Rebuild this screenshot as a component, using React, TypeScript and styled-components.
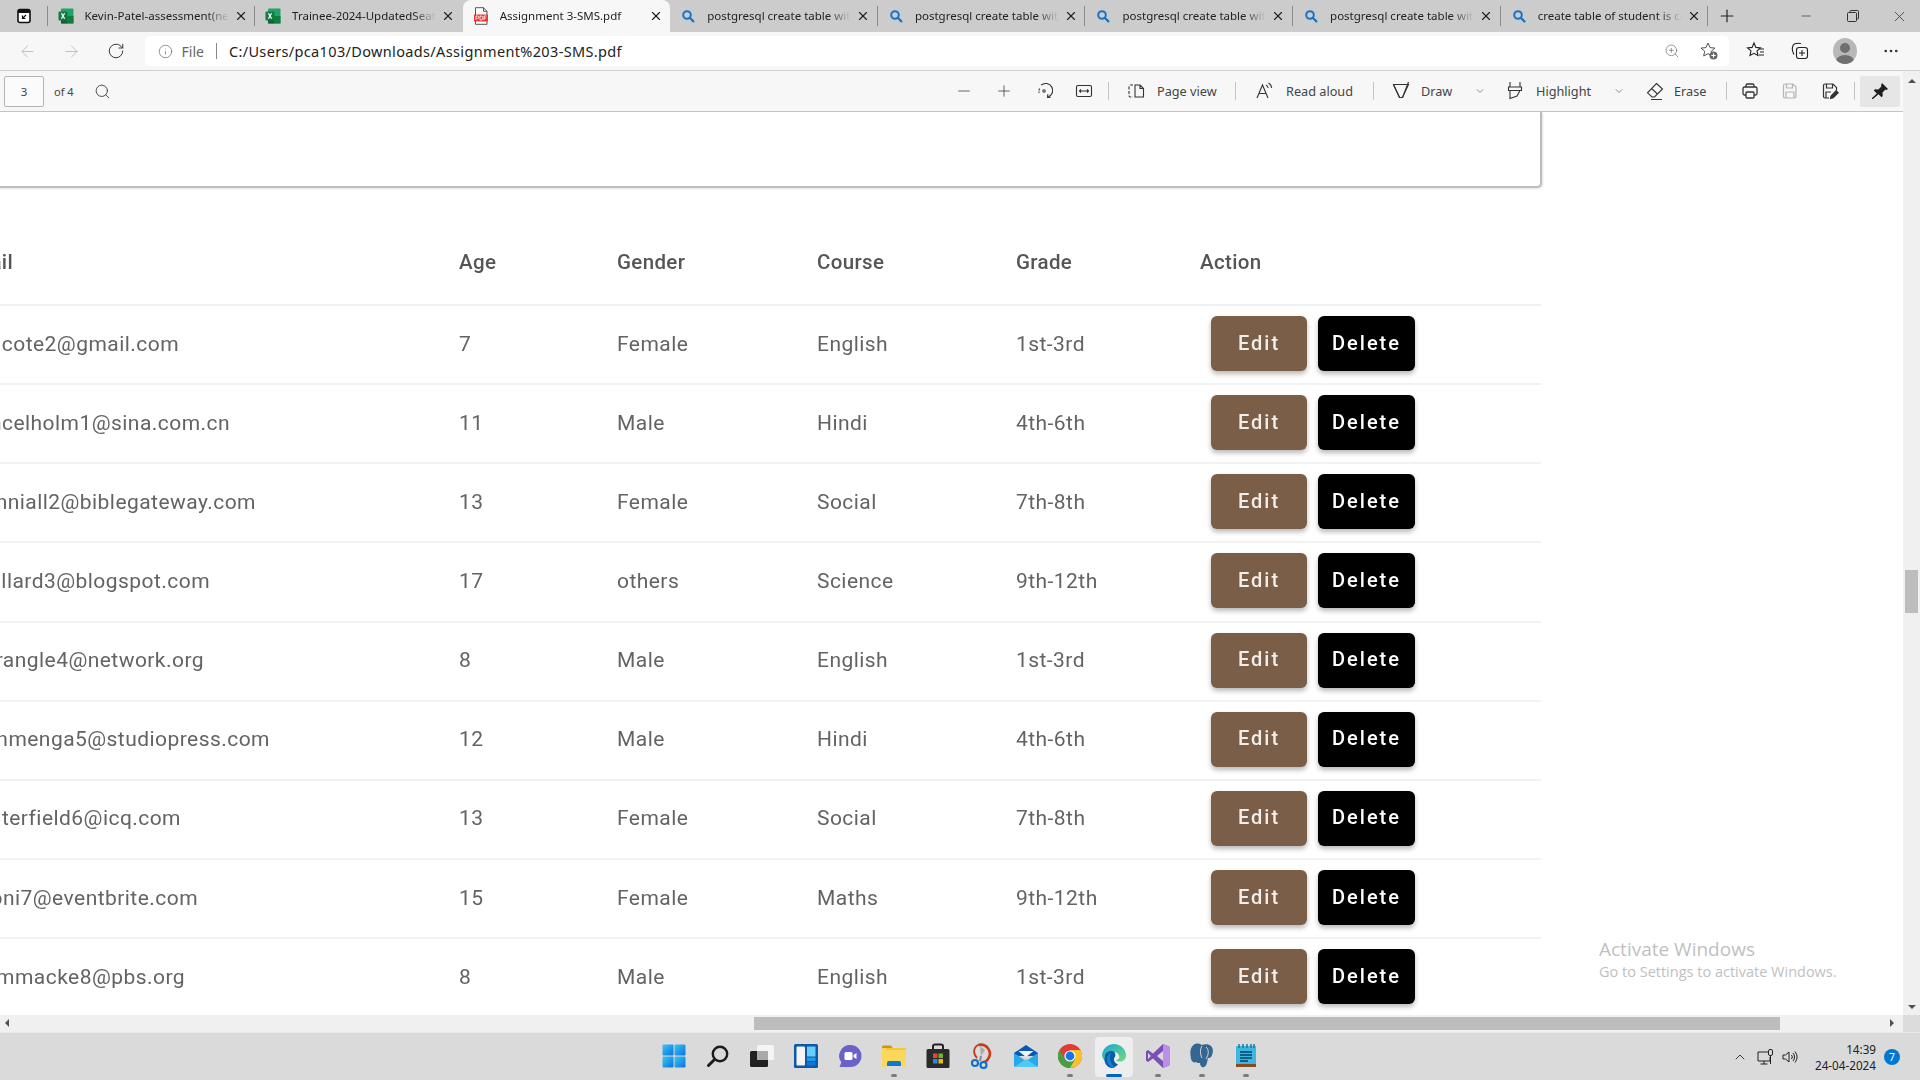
import React from "react";
import styled, { createGlobalStyle } from "styled-components";
import {
  ArrowLeft,
  ArrowRight,
  ChevronDown,
  ChevronUp,
  Info,
  Minus,
  MoreHorizontal,
  Plus,
  RotateCw,
  Search,
  X,
  ZoomIn,
} from "lucide-react";

const GlobalStyle = createGlobalStyle`
  html, body {
    margin: 0;
    padding: 0;
    width: 1920px;
    height: 1080px;
    overflow: hidden;
    background: #fff;
  }
  * { box-sizing: border-box; }
`;

const UI_FONT = `"Noto Sans", "Open Sans", sans-serif`;

const Screen = styled.div`
  width: 1920px;
  height: 1080px;
  display: flex;
  flex-direction: column;
  position: relative;
  font-family: ${UI_FONT};
  overflow: hidden;
`;

/* ---------- tab strip ---------- */
const TabStrip = styled.div`
  height: 32px;
  flex: none;
  background: #cccccc;
  display: flex;
  align-items: stretch;
`;

const StripButton = styled.div`
  width: 47.5px;
  flex: none;
  display: flex;
  align-items: center;
  justify-content: center;
  position: relative;
  &::after {
    content: "";
    position: absolute;
    right: 0;
    top: 6px;
    bottom: 6px;
    width: 1px;
    background: #8a8a8a;
  }
`;

const Tab = styled.div<{ $active?: boolean; $noSep?: boolean }>`
  width: 207.6px;
  flex: none;
  display: flex;
  align-items: center;
  position: relative;
  padding-left: 10px;
  background: ${(p) => (p.$active ? "#f7f7f7" : "transparent")};
  border-radius: ${(p) => (p.$active ? "8px 8px 0 0" : "0")};
  &::after {
    content: "";
    display: ${(p) => (p.$noSep ? "none" : "block")};
    position: absolute;
    right: 0;
    top: 6px;
    bottom: 6px;
    width: 1px;
    background: #8a8a8a;
  }
`;

const TabIcon = styled.div`
  width: 16px;
  height: 16px;
  flex: none;
  display: flex;
  align-items: center;
  justify-content: center;
`;

const TabTitle = styled.div`
  width: 144px;
  margin-left: 11px;
  margin-top: -1px;
  flex: none;
  font-size: 11.5px;
  color: #222;
  white-space: nowrap;
  overflow: hidden;
  mask-image: linear-gradient(to right, #000 84%, transparent 100%);
`;

const TabClose = styled.div`
  margin-left: 5px;
  display: flex;
  color: #222;
`;

const NewTab = styled.div`
  width: 37px;
  flex: none;
  display: flex;
  align-items: center;
  justify-content: center;
  color: #222;
`;

const WindowControls = styled.div`
  margin-left: auto;
  margin-right: -3px;
  display: flex;
  align-items: center;
  color: #333;
`;

const WindowButton = styled.div`
  width: 47px;
  display: flex;
  justify-content: center;
`;

/* ---------- nav bar ---------- */
const NavBar = styled.div`
  height: 39px;
  flex: none;
  background: #f7f7f7;
  border-bottom: 1px solid #cfcfcf;
  display: flex;
  align-items: center;
  padding-left: 5px;
`;

const NavButton = styled.div<{ $dim?: boolean; $w?: number }>`
  width: ${(p) => p.$w ?? 44.5}px;
  flex: none;
  display: flex;
  justify-content: center;
  align-items: center;
  color: ${(p) => (p.$dim ? "#bdbdbd" : "#333")};
`;

const AddressBar = styled.div`
  width: 1584px;
  height: 30px;
  flex: none;
  margin-left: 6px;
  margin-right: 5px;
  background: #fff;
  border-radius: 5px;
  display: flex;
  align-items: center;
  padding-left: 13px;
  padding-right: 10px;
`;

const FileTag = styled.span`
  margin-left: 9px;
  color: #666;
  font-size: 14px;
`;

const AddressSep = styled.span`
  width: 1px;
  height: 16px;
  background: #888;
  margin: 0 12px;
`;

const Url = styled.span`
  color: #222;
  font-size: 14.5px;
  letter-spacing: 0.35px;
`;

const AddressEnd = styled.div`
  margin-left: auto;
  display: flex;
  align-items: center;
  gap: 19px;
  color: #666;
`;

const Avatar = styled.div`
  width: 24px;
  height: 26px;
  border-radius: 50%;
  background: #b8b8b8;
  position: relative;
  overflow: hidden;
  &::before {
    content: "";
    position: absolute;
    left: 7px;
    top: 5px;
    width: 10px;
    height: 10px;
    border-radius: 50%;
    background: #707070;
  }
  &::after {
    content: "";
    position: absolute;
    left: 3px;
    top: 17px;
    width: 18px;
    height: 12px;
    border-radius: 50%;
    background: #707070;
  }
`;

/* ---------- body ---------- */
const Body = styled.div`
  flex: 1;
  min-height: 0;
  display: flex;
`;

const DocColumn = styled.div`
  width: 1903px;
  flex: none;
  display: flex;
  flex-direction: column;
`;

const PdfBar = styled.div`
  height: 41px;
  flex: none;
  background: #f7f7f7;
  border-bottom: 1px solid #c4c4c4;
  display: flex;
  align-items: center;
  padding-left: 4px;
  padding-right: 3px;
  color: #444;
`;

const PageBox = styled.div`
  width: 40px;
  height: 31px;
  border: 1px solid #b5b5b5;
  border-radius: 2px;
  background: #fbfbfb;
  display: flex;
  align-items: center;
  justify-content: center;
  font-size: 11.5px;
`;

const OfPages = styled.span`
  margin-left: 10px;
  font-size: 11px;
`;

const ToolIcon = styled.div<{ $w?: number; $faded?: boolean }>`
  width: ${(p) => p.$w ?? 40}px;
  height: 31px;
  flex: none;
  display: flex;
  align-items: center;
  justify-content: center;
  color: ${(p) => (p.$faded ? "#b5b5b5" : "#333")};
`;

const Tools = styled.div`
  margin-left: auto;
  display: flex;
  align-items: center;
`;

const ToolSep = styled.span<{ $left?: number; $right?: number }>`
  width: 1px;
  height: 18px;
  background: #c4c4c4;
  flex: none;
  margin-left: ${(p) => p.$left ?? 0}px;
  margin-right: ${(p) => p.$right ?? 0}px;
`;

const ToolLabel = styled.span<{ $w: number; $gap: number }>`
  width: ${(p) => p.$w}px;
  margin-left: ${(p) => p.$gap}px;
  flex: none;
  white-space: nowrap;
  font-size: 12.7px;
  color: #444;
`;

const PinBox = styled.div`
  width: 40px;
  height: 31px;
  margin-left: 5px;
  background: #e6e6e6;
  border-radius: 2px;
  display: flex;
  align-items: center;
  justify-content: center;
`;

const Viewer = styled.div`
  flex: 1;
  min-height: 0;
  background: #fff;
  overflow: hidden;
`;

const DocPage = styled.div`
  width: 1541px;
  font-family: Roboto, sans-serif;
  filter: blur(0.45px);
`;

const FormCard = styled.div`
  height: 76px;
  margin-left: -20px;
  width: 1562px;
  background: #fff;
  border: 2px solid #bdbdbd;
  border-top: none;
  border-radius: 0 0 5px 0;
  box-shadow: 1px 1px 2px rgba(0, 0, 0, 0.12);
`;

const COLUMNS = "459px 158px 200px 199px 184px 341px";

const HeadRow = styled.div`
  margin-top: 33px;
  height: 85px;
  display: grid;
  grid-template-columns: ${COLUMNS};
  align-items: start;
  padding-top: 29px;
  border-bottom: 2px solid #f0f0f0;
  font-size: 20.5px;
  font-weight: 500;
  color: #555;
  letter-spacing: 0.35px;
`;

const Row = styled.div`
  height: 79.15px;
  display: grid;
  grid-template-columns: ${COLUMNS};
  align-items: center;
  border-bottom: 2px solid #f2f2f2;
  font-size: 21px;
  color: #636363;
  letter-spacing: 0.45px;
  padding-bottom: 2px;
`;

const EmailCell = styled.div<{ $end: number }>`
  width: ${(p) => p.$end}px;
  display: flex;
  justify-content: flex-end;
  white-space: nowrap;
`;

const Actions = styled.div`
  display: flex;
  gap: 11px;
  padding-left: 11px;
`;

const ActionButton = styled.button<{ $dark?: boolean }>`
  width: ${(p) => (p.$dark ? 97 : 96)}px;
  height: 55px;
  border: none;
  border-radius: 6px;
  padding: 0 0 2px;
  font-family: Roboto, sans-serif;
  font-size: 20px;
  font-weight: 500;
  letter-spacing: 2px;
  color: ${(p) => (p.$dark ? "#fff" : "#f3eeea")};
  background: ${(p) => (p.$dark ? "#000" : "#7b5e48")};
  box-shadow: 0 3px 5px rgba(0, 0, 0, 0.28);
`;

const HScroll = styled.div`
  height: 17px;
  flex: none;
  background: #f0f0f0;
  display: flex;
  align-items: center;
  position: relative;
`;

const HThumb = styled.div`
  margin-left: 754px;
  width: 1026px;
  height: 13px;
  background: #bdbdbd;
`;

const ScrollArrow = styled.div<{ $dir: "left" | "right" | "up" | "down" }>`
  width: 0;
  height: 0;
  flex: none;
  border-style: solid;
  border-color: transparent;
  ${(p) =>
    p.$dir === "left"
      ? "border-width: 4px 4px 4px 0; border-right-color: #505050;"
      : p.$dir === "right"
      ? "border-width: 4px 0 4px 4px; border-left-color: #505050;"
      : p.$dir === "up"
      ? "border-width: 0 4px 4px 4px; border-bottom-color: #505050;"
      : "border-width: 4px 4px 0 4px; border-top-color: #505050;"}
`;

const HArrowLeft = styled.div`
  position: absolute;
  left: 5px;
  top: 4px;
`;

const HArrowRight = styled.div`
  position: absolute;
  right: 9px;
  top: 4px;
`;

const VScroll = styled.div`
  width: 17px;
  flex: none;
  display: flex;
  flex-direction: column;
  background: #f0f0f0;
`;

const VTrack = styled.div`
  flex: 1;
  padding-top: 8px;
  padding-bottom: 6px;
  display: flex;
  flex-direction: column;
  align-items: center;
`;

const VThumb = styled.div`
  width: 13px;
  height: 43px;
  margin-top: 487px;
  margin-bottom: auto;
  background: #bdbdbd;
`;

const ScrollCorner = styled.div`
  height: 17px;
  flex: none;
  background: #dcdcdc;
`;

const Watermark = styled.div`
  position: absolute;
  left: 1599px;
  top: 937px;
  color: #bfbfbf;
  pointer-events: none;
  font-family: "Open Sans", sans-serif;
`;

const WatermarkTitle = styled.div`
  font-size: 19px;
  line-height: 25px;
`;

const WatermarkText = styled.div`
  font-size: 14.5px;
  line-height: 20px;
`;

/* ---------- taskbar ---------- */
const Taskbar = styled.div`
  height: 48px;
  flex: none;
  background: #dadada;
  border-top: 1px solid #e8e8e8;
  display: grid;
  grid-template-columns: 1fr auto 1fr;
  align-items: center;
`;

const TaskIcons = styled.div`
  grid-column: 2;
  display: flex;
`;

const TaskSlot = styled.div<{ $running?: boolean; $active?: boolean }>`
  width: 44px;
  height: 40px;
  display: flex;
  align-items: center;
  justify-content: center;
  position: relative;
  border-radius: 4px;
  &::before {
    content: "";
    display: ${(p) => (p.$active ? "block" : "none")};
    position: absolute;
    inset: 0 3px;
    border-radius: 4px;
    background: #eeeeee;
  }
  &::after {
    content: "";
    display: ${(p) => (p.$running || p.$active ? "block" : "none")};
    position: absolute;
    bottom: 0;
    left: 50%;
    width: ${(p) => (p.$active ? 16 : 6)}px;
    height: 3px;
    transform: translateX(-50%);
    border-radius: 2px;
    background: ${(p) => (p.$active ? "#0067c0" : "#7a7a7a")};
  }
  svg {
    position: relative;
    margin-top: -2px;
  }
`;

const Tray = styled.div`
  grid-column: 3;
  justify-self: end;
  display: flex;
  align-items: center;
  padding-right: 20px;
  color: #222;
`;

const TrayIcon = styled.div<{ $w: number }>`
  width: ${(p) => p.$w}px;
  display: flex;
  justify-content: center;
`;

const Clock = styled.div`
  width: 68px;
  margin-left: 6px;
  text-align: right;
  font-size: 11.7px;
  line-height: 16px;
  color: #222;
`;

const Badge = styled.div`
  width: 16px;
  height: 16px;
  margin-left: 8px;
  border-radius: 50%;
  background: #0078d4;
  color: #fff;
  font-size: 10.5px;
  display: flex;
  align-items: center;
  justify-content: center;
`;

/* ---------- drawn icons ---------- */
const ExcelIcon = () => (
  <svg width="16" height="16" viewBox="0 0 16 16">
    <rect x="3" y="0.5" width="12.5" height="15" rx="1" fill="#21a366" />
    <rect x="9" y="8" width="6.5" height="7.5" fill="#107c41" />
    <rect x="3" y="8" width="6" height="7.5" fill="#185c37" />
    <rect x="0.5" y="3.5" width="9" height="9" rx="1" fill="#107c41" />
    <path d="M2.8 5.3h1.4L5 7l.9-1.7h1.3L5.8 8l1.4 2.7H5.9L5 8.9l-.9 1.8H2.8L4.2 8z" fill="#fff" />
  </svg>
);

const PdfIcon = () => (
  <svg width="16" height="18" viewBox="0 0 16 18">
    <path d="M2.5 .7h8l3.5 3.6v13H2.5z" fill="#fff" stroke="#555" strokeWidth="1" />
    <path d="M10.5 .7v3.6H14" fill="none" stroke="#555" />
    <rect x="1" y="7.5" width="14" height="7" fill="#e93a3a" />
    <path d="M3 13V9h1.6a1.2 1.2 0 010 2.4H3.6M7 9v4h1a2 2 0 000-4zM11 13V9h2.3M11 11h2" stroke="#fff" strokeWidth=".8" fill="none" />
  </svg>
);

const BingIcon = () => (
  <svg width="14" height="14" viewBox="0 0 14 14">
    <circle cx="6" cy="6" r="3.8" fill="none" stroke="#1a73c9" strokeWidth="2" />
    <path d="M8.8 8.8l3.6 3.6" stroke="#1a73c9" strokeWidth="2.2" strokeLinecap="round" />
  </svg>
);

const TabActionsIcon = () => (
  <svg width="16" height="16" viewBox="0 0 16 16">
    <rect x="2" y="1.5" width="12" height="13" rx="2" fill="#fff" stroke="#111" strokeWidth="1.6" />
    <rect x="2" y="1.5" width="12" height="3.5" rx="1.5" fill="#111" />
    <path d="M10 7l-3.5 3.5M6.5 7.5v3h3" stroke="#111" strokeWidth="1.2" fill="none" />
  </svg>
);

const RestoreIcon = () => (
  <svg width="12" height="12" viewBox="0 0 12 12" fill="none" stroke="currentColor" strokeWidth="1">
    <rect x="0.5" y="2.5" width="9" height="9" rx="1" />
    <path d="M3 2.5V1.5a1 1 0 011-1h6.5a1 1 0 011 1V8a1 1 0 01-1 1h-1" />
  </svg>
);

const line = { fill: "none", stroke: "currentColor", strokeWidth: 1.1 };

const FitWidthIcon = () => (
  <svg width="18" height="18" viewBox="0 0 18 18" {...line}>
    <rect x="1.5" y="3.5" width="15" height="11" rx="1.5" />
    <path d="M4.5 9h9M6 7.5L4.5 9 6 10.5M12 7.5L13.5 9 12 10.5" />
  </svg>
);

const RotateIcon = () => (
  <svg width="18" height="18" viewBox="0 0 18 18" {...line}>
    <path d="M6 3.2a7 7 0 116.5 12" />
    <path d="M4.5 6.5A7 7 0 004.2 11" strokeDasharray="2 1" />
    <path d="M12.8 12.2l-.3 3 3 .2" />
    <circle cx="9" cy="9" r="1.2" />
  </svg>
);

const PageViewIcon = () => (
  <svg width="18" height="18" viewBox="0 0 18 18" {...line}>
    <path d="M6 3H3.5A1.5 1.5 0 002 4.5v9A1.5 1.5 0 003.5 15H6" strokeDasharray="3 1.5" />
    <path d="M8 3h5l3.5 3.5V15H8zM13 3v3.5h3.5" />
  </svg>
);

const ReadAloudIcon = () => (
  <svg width="20" height="18" viewBox="0 0 20 18" {...line}>
    <path d="M2 16L7.5 3 13 16M4 11.5h7" />
    <path d="M11 3c1.2.6 2 1.6 2.2 3M13.5 1c1.8 1 3 2.6 3.2 5" />
  </svg>
);

const DrawIcon = () => (
  <svg width="20" height="20" viewBox="0 0 20 20" {...line}>
    <path d="M2.5 3.5h15l-6 13h-3z" />
    <path d="M2.5 3.5L8.5 16.5" />
    <path d="M17.5 1L11.5 16.5" />
  </svg>
);

const HighlightIcon = () => (
  <svg width="18" height="20" viewBox="0 0 18 20" {...line}>
    <path d="M4 1v5h10V1M2.5 6h13v3.5h-13zM4 9.5v8l7-2.5 3-5.5" />
  </svg>
);

const EraseIcon = () => (
  <svg width="20" height="20" viewBox="0 0 20 20" {...line}>
    <path d="M11.5 2.5l6 5.5-8 8H7L2.5 11.8zM6.5 7.5l6 5.5M6 18.5h11" />
  </svg>
);

const PrintIcon = () => (
  <svg width="18" height="18" viewBox="0 0 18 18" {...line} strokeWidth={1.3}>
    <path d="M5 5V3.5A1.5 1.5 0 016.5 2h5A1.5 1.5 0 0113 3.5V5" />
    <path d="M5 13H3.5A1.5 1.5 0 012 11.5v-5A1.5 1.5 0 013.5 5h11A1.5 1.5 0 0116 6.5v5a1.5 1.5 0 01-1.5 1.5H13" />
    <rect x="5" y="10" width="8" height="6" rx="1" />
  </svg>
);

const SaveIcon = ({ pen }: { pen?: boolean }) => (
  <svg width="18" height="18" viewBox="0 0 18 18" {...line} strokeWidth={1.2}>
    <path d={pen ? "M8 16H4a1.5 1.5 0 01-1.5-1.5v-11A1.5 1.5 0 014 2h8l3.5 3.5V8" : "M4 2h8l3 3v9.5a1.5 1.5 0 01-1.5 1.5H4A1.5 1.5 0 012.5 14.5v-11A1.5 1.5 0 014 2z"} />
    <path d="M5.5 2v4h6V2" />
    {pen ? <path d="M5 16v-6h5" /> : <path d="M5 16v-6h8v6" />}
    {pen && <path d="M9.5 16.5l.7-2.8 5-5 2 2-5 5z" fill="currentColor" />}
  </svg>
);

const PinIcon = () => (
  <svg width="18" height="18" viewBox="0 0 18 18">
    <path d="M11 1l6 6-1.5 1-1-.4-3 3 .2 3.4-1.2 1.2-3-3L2 17l-1 0 0-1 4.8-4.5-3-3L4 7.2l3.4.2 3-3-.4-1z" fill="#1e1e1e" />
  </svg>
);

const FavAddIcon = () => (
  <svg width="20" height="20" viewBox="0 0 20 20">
    <path d="M9 2l2 4.6 5 .5-3.8 3.2 1 4.8L9 12.7 4.7 15l1-4.8L2 7.1l5-.5z" fill="none" stroke="#555" strokeWidth="1" />
    <circle cx="14.5" cy="14.5" r="4" fill="#666" />
    <path d="M14.5 12.3v4.4M12.3 14.5h4.4" stroke="#fff" strokeWidth="1" />
  </svg>
);

const FavoritesIcon = () => (
  <svg width="20" height="20" viewBox="0 0 20 20" fill="none" stroke="#222" strokeWidth="1.1">
    <path d="M8 2l1.9 4.4 4.6.5-3.5 3 1 4.6L8 12.3l-4 2.2 1-4.6-3.5-3 4.6-.5z" />
    <path d="M13 8h5M14 11h4M13 14h5" />
  </svg>
);

const CollectionsIcon = () => (
  <svg width="20" height="20" viewBox="0 0 20 20" fill="none" stroke="#222" strokeWidth="1.1">
    <path d="M4 13.5C2 10 2 7 3 4.5 4 2.5 7 2 11 2.5" />
    <rect x="6.5" y="6.5" width="11" height="11" rx="2.5" fill="#f7f7f7" />
    <path d="M12 9v6M9 12h6" />
  </svg>
);

const NetworkIcon = () => (
  <svg width="17" height="16" viewBox="0 0 17 16" fill="none" stroke="#222" strokeWidth="1">
    <path d="M11 3H1v9h12V8M7 12v3M3.5 15h7" />
    <rect x="11.5" y="0.5" width="4" height="6" rx="1.5" />
    <path d="M13.5 6.5V15" />
  </svg>
);

const VolumeIcon = () => (
  <svg width="17" height="16" viewBox="0 0 17 16" fill="none" stroke="#222" strokeWidth="1">
    <path d="M1 6v4h2.5L7 13V3L3.5 6zM9.5 6a3 3 0 010 4M11 4a6 6 0 010 8M13 2.5a9 9 0 010 11" />
  </svg>
);

const StartIcon = () => (
  <svg width="24" height="24" viewBox="0 0 24 24">
    <defs>
      <linearGradient id="win" x1="0" y1="0" x2="1" y2="1">
        <stop offset="0" stopColor="#3cc4f7" />
        <stop offset="1" stopColor="#0a74d8" />
      </linearGradient>
    </defs>
    <rect x="0.5" y="0.5" width="11" height="11" rx="1" fill="url(#win)" />
    <rect x="12.5" y="0.5" width="11" height="11" rx="1" fill="url(#win)" />
    <rect x="0.5" y="12.5" width="11" height="11" rx="1" fill="url(#win)" />
    <rect x="12.5" y="12.5" width="11" height="11" rx="1" fill="url(#win)" />
  </svg>
);

const TaskSearchIcon = () => (
  <svg width="24" height="24" viewBox="0 0 24 24" fill="none" stroke="#1c1c1c">
    <circle cx="14" cy="10" r="7.2" strokeWidth="2.4" />
    <path d="M8.5 15.5L2.5 21.5" strokeWidth="3" strokeLinecap="round" />
  </svg>
);

const TaskViewIcon = () => (
  <svg width="24" height="24" viewBox="0 0 24 24">
    <rect x="7" y="1" width="17" height="15" rx="1.5" fill="#f5f5f5" />
    <rect x="0" y="7" width="18" height="16" rx="1.5" fill="#202020" />
    <rect x="7" y="7" width="11" height="9" fill="#a9a9a9" />
  </svg>
);

const WidgetsIcon = () => (
  <svg width="24" height="24" viewBox="0 0 24 24">
    <rect x="0" y="0" width="24" height="24" rx="1.5" fill="#0d58a8" />
    <rect x="2.5" y="2.5" width="8.5" height="19" rx="1" fill="#f4f4f4" />
    <rect x="13" y="2.5" width="8.5" height="10" fill="#66d0fb" />
    <rect x="13" y="13.5" width="8.5" height="3.5" fill="#1f9cf0" />
    <rect x="13" y="18" width="8.5" height="3.5" fill="#0f78d4" />
  </svg>
);

const ChatIcon = () => (
  <svg width="24" height="24" viewBox="0 0 24 24">
    <path d="M12.5 1a11 11 0 110 22H1.5l1.8-4.5A11 11 0 0112.5 1z" fill="#6a62c9" />
    <rect x="6.5" y="8" width="8" height="8" rx="1.5" fill="#fff" />
    <path d="M15.5 11l3-2v6l-3-2z" fill="#fff" />
  </svg>
);

const FolderIcon = () => (
  <svg width="26" height="24" viewBox="0 0 26 24">
    <path d="M1 3a1.5 1.5 0 011.5-1.5H10l2 3H1z" fill="#c9960f" />
    <rect x="1" y="4" width="24" height="19" rx="1.5" fill="#fbd75b" />
    <rect x="5" y="4" width="20" height="2" fill="#f4c53a" />
    <path d="M6 23v-4a2 2 0 012-2h10a2 2 0 012 2v4z" fill="#0f78c8" />
    <rect x="4" y="22" width="18" height="1.5" fill="#d9d9d9" />
  </svg>
);

const StoreIcon = () => (
  <svg width="24" height="26" viewBox="0 0 24 26">
    <path d="M7 7V3.5A2 2 0 019 1.5h6a2 2 0 012 2V7" fill="none" stroke="#222" strokeWidth="2" />
    <rect x="0.5" y="6" width="23" height="19" rx="1.5" fill="#2a2a2a" />
    <rect x="7" y="10.5" width="4.5" height="4.5" fill="#e8452c" />
    <rect x="12.5" y="10.5" width="4.5" height="4.5" fill="#6fb62c" />
    <rect x="7" y="16" width="4.5" height="4.5" fill="#1f8fe6" />
    <rect x="12.5" y="16" width="4.5" height="4.5" fill="#f8b21d" />
  </svg>
);

const SnipIcon = () => (
  <svg width="24" height="26" viewBox="0 0 24 26" fill="none">
    <path d="M8 2c9-2 15 7 10 14-1 2-3 3-5 3" stroke="#c93a1c" strokeWidth="2.6" />
    <path d="M8 2C3 5 3 11 7 15" stroke="#c93a1c" strokeWidth="1.8" />
    <path d="M10 3l1 10 4-6z" fill="#a9a9a9" />
    <path d="M11 13l-1 5" stroke="#888" strokeWidth="2" />
    <circle cx="5" cy="20" r="3" stroke="#1272c6" strokeWidth="2.2" />
    <circle cx="13.5" cy="22" r="3" stroke="#1272c6" strokeWidth="2.2" />
  </svg>
);

const MailIcon = () => (
  <svg width="24" height="24" viewBox="0 0 24 24">
    <path d="M12 1L0 9v3h24V9z" fill="#0a58b4" />
    <path d="M4.5 7h15l-7.5 6z" fill="#f4f4f4" />
    <path d="M0 9l12 8 12-8v12.5a1.5 1.5 0 01-1.5 1.5h-21A1.5 1.5 0 010 21.5z" fill="#28a8ea" />
    <path d="M0 23l12-8 12 8z" fill="#50c8f4" />
  </svg>
);

const ChromeIcon = () => (
  <svg width="24" height="24" viewBox="0 0 24 24">
    <circle cx="12" cy="12" r="12" fill="#e53935" />
    <path d="M12 24a12 12 0 0010.4-18H12z" fill="#fbc02d" />
    <path d="M1.6 6A12 12 0 0012 24l5.2-9H6.8z" fill="#43a047" />
    <circle cx="12" cy="12" r="5.6" fill="#fff" />
    <circle cx="12" cy="12" r="4.4" fill="#1a73e8" />
  </svg>
);

const EdgeIcon = () => (
  <svg width="24" height="24" viewBox="0 0 24 24">
    <defs>
      <linearGradient id="edgeTop" x1="0" y1="0" x2="1" y2="1">
        <stop offset="0" stopColor="#1ba3d8" />
        <stop offset="1" stopColor="#6fdc7d" />
      </linearGradient>
    </defs>
    <path d="M12 0a12 12 0 0112 12c0 3.5-3 5.5-6 5.5-2 0-4-.7-4.5-1.5 3 0 4.5-2 3.5-4.5C16 8 12 7 8 9c-3 1.5-5 5-5 8a12 12 0 01-3-5A12 12 0 0112 0z" fill="url(#edgeTop)" />
    <path d="M3 12c0-3 3.5-5.5 7-5 3 .5 4 3 3 5.5-2 3-1 6.5 3 8-1.5 1.5-4 3.5-6 3.5C5 24 1 18 3 12z" fill="#0c5ca8" />
    <path d="M5 15c0-3 2-6 4.5-6.5C7 11 7 19 13 23.5 8 24 5 20 5 15z" fill="#1283d3" />
  </svg>
);

const VsIcon = () => (
  <svg width="24" height="24" viewBox="0 0 24 24">
    <path d="M17 0l7 3v18l-7 3-10-9.5L2 18l-2-1.5v-9L2 6l5 3.5z" fill="#7a4fb5" />
    <path d="M17 0l7 3v18l-7 3z" fill="#bb8ee8" />
    <path d="M17 7v10l-6-5z" fill="#dadada" />
    <path d="M2 9v6l3-3z" fill="#dadada" />
  </svg>
);

const PgIcon = () => (
  <svg width="24" height="26" viewBox="0 0 24 26">
    <path d="M5 1c3-1 5 0 7 1 3-1.5 7-1 9 1 3 3 2 8 0 11-1 1-2 1-3 1-1 4-1 8-4 9-2 1-4-1-4-4-2 0-3 0-4-1-2 1-4 0-5-3C0 10-.5 4 5 1z" fill="#336791" />
    <path d="M12 3c-2 3-2 8 0 12" stroke="#dadada" strokeWidth="1" fill="none" />
    <path d="M16 4c3 3 3 7 0 12" stroke="#dadada" strokeWidth="1" fill="none" />
  </svg>
);

const NotepadIcon = () => (
  <svg width="22" height="26" viewBox="0 0 22 26">
    <rect x="1" y="3" width="20" height="21" rx="1" fill="#3db7e0" />
    <rect x="1" y="21" width="20" height="3" fill="#8a4a1f" />
    <path d="M4 1v4M8 1v4M12 1v4M16 1v4M19 1v4" stroke="#1c6e96" strokeWidth="1.4" />
    <path d="M5 9h12M5 12h12M5 15h12M5 18h8" stroke="#0f5f87" strokeWidth="1.8" />
  </svg>
);

type Student = {
  email: string;
  end: number;
  age: number;
  gender: string;
  course: string;
  grade: string;
};

const students: Student[] = [
  { email: "cote2@gmail.com", end: 179, age: 7, gender: "Female", course: "English", grade: "1st-3rd" },
  { email: "ncelholm1@sina.com.cn", end: 230, age: 11, gender: "Male", course: "Hindi", grade: "4th-6th" },
  { email: "nniall2@biblegateway.com", end: 256, age: 13, gender: "Female", course: "Social", grade: "7th-8th" },
  { email: "illard3@blogspot.com", end: 210, age: 17, gender: "others", course: "Science", grade: "9th-12th" },
  { email: "rangle4@network.org", end: 204, age: 8, gender: "Male", course: "English", grade: "1st-3rd" },
  { email: "nmenga5@studiopress.com", end: 270, age: 12, gender: "Male", course: "Hindi", grade: "4th-6th" },
  { email: "terfield6@icq.com", end: 181, age: 13, gender: "Female", course: "Social", grade: "7th-8th" },
  { email: "oni7@eventbrite.com", end: 198, age: 15, gender: "Female", course: "Maths", grade: "9th-12th" },
  { email: "mmacke8@pbs.org", end: 185, age: 8, gender: "Male", course: "English", grade: "1st-3rd" },
];

const tabs = [
  { title: "Kevin-Patel-assessment(new)", icon: <ExcelIcon /> },
  { title: "Trainee-2024-UpdatedSeating", icon: <ExcelIcon />, noSep: true },
  { title: "Assignment 3-SMS.pdf", icon: <PdfIcon />, active: true, noSep: true },
  { title: "postgresql create table with", icon: <BingIcon /> },
  { title: "postgresql create table with", icon: <BingIcon /> },
  { title: "postgresql create table with", icon: <BingIcon /> },
  { title: "postgresql create table with", icon: <BingIcon /> },
  { title: "create table of student is can", icon: <BingIcon /> },
];

const taskItems = [
  { key: "start", icon: <StartIcon /> },
  { key: "search", icon: <TaskSearchIcon /> },
  { key: "view", icon: <TaskViewIcon /> },
  { key: "widgets", icon: <WidgetsIcon /> },
  { key: "chat", icon: <ChatIcon /> },
  { key: "files", icon: <FolderIcon />, running: true },
  { key: "store", icon: <StoreIcon /> },
  { key: "snip", icon: <SnipIcon /> },
  { key: "mail", icon: <MailIcon /> },
  { key: "chrome", icon: <ChromeIcon />, running: true },
  { key: "edge", icon: <EdgeIcon />, active: true },
  { key: "vs", icon: <VsIcon />, running: true },
  { key: "pg", icon: <PgIcon />, running: true },
  { key: "notes", icon: <NotepadIcon />, running: true },
];

const App = () => {
  return (
    <>
      <GlobalStyle />
      <Screen>
        <TabStrip>
          <StripButton>
            <TabActionsIcon />
          </StripButton>
          {tabs.map((t, i) => (
            <Tab key={i} $active={t.active} $noSep={t.noSep}>
              <TabIcon>{t.icon}</TabIcon>
              <TabTitle>{t.title}</TabTitle>
              <TabClose>
                <X size={14} strokeWidth={2} />
              </TabClose>
            </Tab>
          ))}
          <NewTab>
            <Plus size={20} strokeWidth={1.4} />
          </NewTab>
          <WindowControls>
            <WindowButton>
              <Minus size={14} strokeWidth={1.2} />
            </WindowButton>
            <WindowButton>
              <RestoreIcon />
            </WindowButton>
            <WindowButton>
              <X size={17} strokeWidth={1.1} />
            </WindowButton>
          </WindowControls>
        </TabStrip>

        <NavBar>
          <NavButton $dim>
            <ArrowLeft size={19} strokeWidth={1.2} />
          </NavButton>
          <NavButton $dim>
            <ArrowRight size={19} strokeWidth={1.2} />
          </NavButton>
          <NavButton>
            <RotateCw size={18} strokeWidth={1.3} />
          </NavButton>
          <AddressBar>
            <Info size={15} strokeWidth={1.1} color="#666" />
            <FileTag>File</FileTag>
            <AddressSep />
            <Url>C:/Users/pca103/Downloads/Assignment%203-SMS.pdf</Url>
            <AddressEnd>
              <ZoomIn size={16} strokeWidth={1} />
              <FavAddIcon />
            </AddressEnd>
          </AddressBar>
          <NavButton>
            <FavoritesIcon />
          </NavButton>
          <NavButton>
            <CollectionsIcon />
          </NavButton>
          <NavButton>
            <Avatar />
          </NavButton>
          <NavButton $w={48}>
            <MoreHorizontal size={18} strokeWidth={1.6} />
          </NavButton>
        </NavBar>

        <Body>
          <DocColumn>
            <PdfBar>
              <PageBox>3</PageBox>
              <OfPages>of 4</OfPages>
              <ToolIcon $w={58}>
                <Search size={17} strokeWidth={1.2} />
              </ToolIcon>
              <Tools>
                <ToolIcon>
                  <Minus size={18} strokeWidth={1} />
                </ToolIcon>
                <ToolIcon>
                  <Plus size={18} strokeWidth={1} />
                </ToolIcon>
                <ToolIcon>
                  <RotateIcon />
                </ToolIcon>
                <ToolIcon>
                  <FitWidthIcon />
                </ToolIcon>
                <ToolSep $left={4} $right={17} />
                <ToolIcon $w={20}>
                  <PageViewIcon />
                </ToolIcon>
                <ToolLabel $w={60} $gap={11}>Page view</ToolLabel>
                <ToolSep $left={18} $right={18} />
                <ToolIcon $w={22}>
                  <ReadAloudIcon />
                </ToolIcon>
                <ToolLabel $w={67} $gap={10}>Read aloud</ToolLabel>
                <ToolSep $left={20} $right={17} />
                <ToolIcon $w={20}>
                  <DrawIcon />
                </ToolIcon>
                <ToolLabel $w={33} $gap={10}>Draw</ToolLabel>
                <ToolIcon $w={51}>
                  <ChevronDown size={12} strokeWidth={1.1} />
                </ToolIcon>
                <ToolIcon $w={20}>
                  <HighlightIcon />
                </ToolIcon>
                <ToolLabel $w={57} $gap={11}>Highlight</ToolLabel>
                <ToolIcon $w={52}>
                  <ChevronDown size={12} strokeWidth={1.1} />
                </ToolIcon>
                <ToolIcon $w={20}>
                  <EraseIcon />
                </ToolIcon>
                <ToolLabel $w={34} $gap={9}>Erase</ToolLabel>
                <ToolSep $left={18} $right={3} />
                <ToolIcon>
                  <PrintIcon />
                </ToolIcon>
                <ToolIcon $faded>
                  <SaveIcon />
                </ToolIcon>
                <ToolIcon>
                  <SaveIcon pen />
                </ToolIcon>
                <ToolSep $left={4} />
                <PinBox>
                  <PinIcon />
                </PinBox>
              </Tools>
            </PdfBar>

            <Viewer>
              <DocPage>
                <FormCard />
                <HeadRow>
                  <EmailCell $end={13}>Email</EmailCell>
                  <div>Age</div>
                  <div>Gender</div>
                  <div>Course</div>
                  <div>Grade</div>
                  <div>Action</div>
                </HeadRow>
                {students.map((s) => (
                  <Row key={s.email}>
                    <EmailCell $end={s.end}>{s.email}</EmailCell>
                    <div>{s.age}</div>
                    <div>{s.gender}</div>
                    <div>{s.course}</div>
                    <div>{s.grade}</div>
                    <Actions>
                      <ActionButton>Edit</ActionButton>
                      <ActionButton $dark>Delete</ActionButton>
                    </Actions>
                  </Row>
                ))}
              </DocPage>
            </Viewer>

            <HScroll>
              <HArrowLeft>
                <ScrollArrow $dir="left" />
              </HArrowLeft>
              <HThumb />
              <HArrowRight>
                <ScrollArrow $dir="right" />
              </HArrowRight>
            </HScroll>
          </DocColumn>

          <VScroll>
            <VTrack>
              <ScrollArrow $dir="up" />
              <VThumb />
              <ScrollArrow $dir="down" />
            </VTrack>
            <ScrollCorner />
          </VScroll>
        </Body>

        <Watermark>
          <WatermarkTitle>Activate Windows</WatermarkTitle>
          <WatermarkText>Go to Settings to activate Windows.</WatermarkText>
        </Watermark>

        <Taskbar>
          <TaskIcons>
            {taskItems.map((t) => (
              <TaskSlot key={t.key} $running={t.running} $active={t.active}>
                {t.icon}
              </TaskSlot>
            ))}
          </TaskIcons>
          <Tray>
            <TrayIcon $w={24}>
              <ChevronUp size={16} strokeWidth={1.3} />
            </TrayIcon>
            <TrayIcon $w={26}>
              <NetworkIcon />
            </TrayIcon>
            <TrayIcon $w={24}>
              <VolumeIcon />
            </TrayIcon>
            <Clock>
              14:39
              <br />
              24-04-2024
            </Clock>
            <Badge>7</Badge>
          </Tray>
        </Taskbar>
      </Screen>
    </>
  );
};

export default App;
